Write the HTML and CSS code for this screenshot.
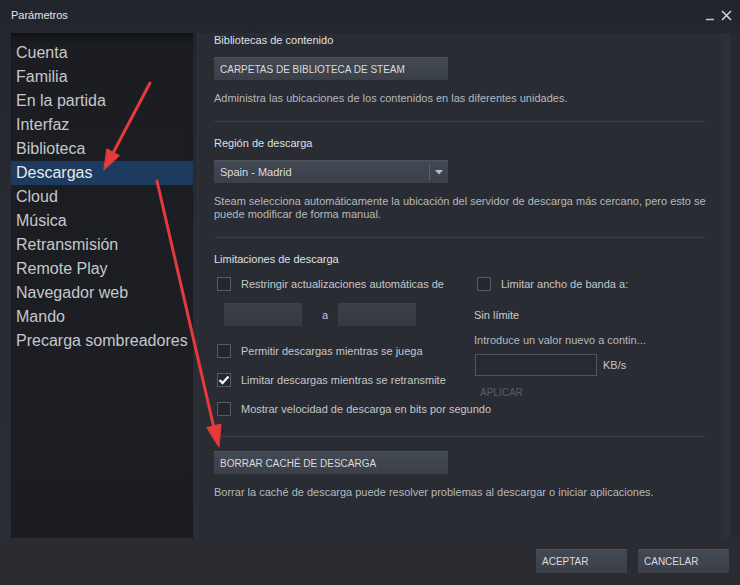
FILE: index.html
```html
<!DOCTYPE html>
<html>
<head>
    <meta charset="UTF-8">
    <title>Parámetros</title>
    <link rel="stylesheet" href="styles.css">
</head>
<body>
    <div class="dialog">
        <div class="titlebar">
            <span class="title">Parámetros</span>
            <div class="window-controls">
                <svg width="10" height="10" viewBox="0 0 10 10"><path d="M1 8.5 H9" stroke="#c8cacd" stroke-width="1.4"/></svg>
                <svg width="11" height="11" viewBox="0 0 11 11"><path d="M1 1 L10 10 M10 1 L1 10" stroke="#d4d6d8" stroke-width="1.5"/></svg>
            </div>
        </div>

        <div class="main">
            <ul class="nav">
                <li>Cuenta</li>
                <li>Familia</li>
                <li>En la partida</li>
                <li>Interfaz</li>
                <li>Biblioteca</li>
                <li class="active">Descargas</li>
                <li>Cloud</li>
                <li>Música</li>
                <li>Retransmisión</li>
                <li>Remote Play</li>
                <li>Navegador web</li>
                <li>Mando</li>
                <li>Precarga sombreadores</li>
            </ul>

            <div class="page">
                <h3 class="group-title">Bibliotecas de contenido</h3>
                <button class="steam-btn wide gap-btn">CARPETAS DE BIBLIOTECA DE STEAM</button>
                <p class="desc gap-desc">Administra las ubicaciones de los contenidos en las diferentes unidades.</p>
                <div class="sep"></div>

                <h3 class="group-title">Región de descarga</h3>
                <div class="dropdown gap-btn">
                    <span class="dropdown-value">Spain - Madrid</span>
                    <span class="dropdown-arrow">
                        <svg width="8" height="5" viewBox="0 0 8 5"><path d="M0 0 H8 L4 4.5 Z" fill="#b9bcc0"/></svg>
                    </span>
                </div>
                <p class="desc two-line">Steam selecciona automáticamente la ubicación del servidor de descarga más cercano, pero esto se puede modificar de forma manual.</p>
                <div class="sep"></div>

                <h3 class="group-title">Limitaciones de descarga</h3>
                <div class="limits">
                    <div class="limits-left">
                        <label class="check first"><span class="box"></span>Restringir actualizaciones automáticas de</label>
                        <div class="time-range">
                            <span class="time-field"></span>
                            <span class="time-sep">a</span>
                            <span class="time-field"></span>
                        </div>
                        <label class="check after-range"><span class="box"></span>Permitir descargas mientras se juega</label>
                        <label class="check next"><span class="box checked">
                            <svg width="12" height="10" viewBox="0 0 12 10"><path d="M1.5 5 L4.5 8 L10.5 1.5" fill="none" stroke="#f2f2f2" stroke-width="2.4"/></svg>
                        </span>Limitar descargas mientras se retransmite</label>
                        <label class="check next nowrap"><span class="box"></span>Mostrar velocidad de descarga en bits por segundo</label>
                    </div>
                    <div class="limits-right">
                        <label class="check first"><span class="box"></span>Limitar ancho de banda a:</label>
                        <div class="bw-current">Sin límite</div>
                        <div class="bw-hint">Introduce un valor nuevo a contin...</div>
                        <div class="bw-row">
                            <span class="bw-input"></span>
                            <span class="bw-unit">KB/s</span>
                        </div>
                        <div class="bw-apply">APLICAR</div>
                    </div>
                </div>
                <div class="sep sep-low"></div>

                <button class="steam-btn wide cache-btn">BORRAR CACHÉ DE DESCARGA</button>
                <p class="desc gap-desc">Borrar la caché de descarga puede resolver problemas al descargar o iniciar aplicaciones.</p>
            </div>
            <div class="track"></div>
        </div>

        <div class="footer">
            <button class="steam-btn footer-btn">ACEPTAR</button>
            <button class="steam-btn footer-btn">CANCELAR</button>
        </div>

        <!-- red pointers over the dialog -->
        <svg class="pointers" width="740" height="585" viewBox="0 0 740 585">
            <g fill="#e43a3c" stroke="#e43a3c" stroke-linecap="round">
                <line x1="150" y1="83" x2="112" y2="155" stroke-width="3"/>
                <polygon points="104,170 119.5,155.6 107.1,149" stroke-width="1" stroke-linejoin="round"/>
                <line x1="157" y1="181" x2="214" y2="428" stroke-width="3"/>
                <polygon points="219,447 221,424 207,427.5" stroke-width="1" stroke-linejoin="round"/>
            </g>
        </svg>
    </div>
</body>
</html>
```

FILE: styles.css
```css
html, body {
    padding: 0;
    margin: 0;
}

body {
    font-family: "Liberation Sans", Arial, sans-serif;
    background-color: #24272d;
    color: #c4c7ca;
}

.dialog {
    position: relative;
    width: 740px;
    height: 585px;
    display: flex;
    flex-direction: column;
    background: linear-gradient(#22252b, #282b31 40%, #2a2d33);
    overflow: hidden;
}

.titlebar {
    height: 33px;
    display: flex;
    align-items: flex-start;
    justify-content: space-between;
    padding: 9px 8px 0 11px;
    box-sizing: border-box;
}

.title {
    font-size: 11px;
    line-height: 13px;
    color: #e2e4e6;
}

.window-controls {
    display: flex;
    align-items: flex-end;
    gap: 6px;
    padding-top: 1px;
}

.main {
    flex: 1;
    display: flex;
    padding-left: 11px;
    min-height: 0;
}

.nav {
    list-style: none;
    margin: 0;
    padding: 8px 0 0 0;
    width: 182px;
    background: linear-gradient(#16171b, #1c1d22 3%, #1d1e23 80%, #1b1c21);
    box-shadow: inset 0 5px 4px -3px #101114;
}

.nav li {
    font-size: 16px;
    line-height: 24px;
    height: 24px;
    padding-left: 5px;
    color: #c5c8cb;
    white-space: nowrap;
}

.nav li.active {
    background-color: #1c3b5e;
    color: #e6e9ec;
}

.page {
    flex: 1;
    margin-left: 4px;
    padding: 0 15px 0 16px;
    background-color: #292c33;
    border-left: 1px solid #2f3239;
    display: flex;
    flex-direction: column;
    align-items: flex-start;
}

.track {
    width: 20px;
    background: linear-gradient(90deg, #2b2e35, #2e3137 50%, #26292e 50%);
}

.group-title {
    margin: 0;
    font-size: 11px;
    line-height: 14px;
    font-weight: normal;
    color: #dfe1e3;
}

.sep {
    align-self: stretch;
    height: 1px;
    background-color: #3b3e45;
    margin: 16px 0 14px 0;
}

.sep-low {
    margin: 20px 0 14px 0;
}

.steam-btn {
    font-family: inherit;
    font-size: 10px;
    color: #dadcde;
    text-align: left;
    border: none;
    border-top: 1px solid #4c525c;
    background: linear-gradient(#434953, #3a3f48);
    padding: 0 6px;
    box-sizing: border-box;
}

.wide {
    width: 234px;
    height: 23px;
}

.gap-btn {
    margin-top: 10px;
}

.desc {
    margin: 0;
    font-size: 11px;
    line-height: 14px;
    color: #b5b9bd;
}

.gap-desc {
    margin-top: 11px;
}

.two-line {
    margin: 12px -10px 0 0;
    line-height: 13px;
}

.dropdown {
    width: 234px;
    height: 23px;
    display: flex;
    align-items: center;
    background: linear-gradient(#434953, #3a3f48);
    border-top: 1px solid #4c525c;
    box-sizing: border-box;
    font-size: 11px;
    color: #dadcde;
}

.dropdown-value {
    flex: 1;
    padding-left: 6px;
}

.dropdown-arrow {
    width: 18px;
    height: 17px;
    border-left: 1px solid #5c626c;
    display: flex;
    align-items: center;
    justify-content: center;
}

.limits {
    display: flex;
    align-self: stretch;
}

.limits-left {
    width: 260px;
    display: flex;
    flex-direction: column;
}

.limits-right {
    flex: 1;
    display: flex;
    flex-direction: column;
    align-items: flex-start;
    font-size: 11px;
    line-height: 14px;
}

.check {
    display: flex;
    align-items: center;
    gap: 10px;
    margin-left: 3px;
    font-size: 11px;
    line-height: 14px;
    color: #c4c7ca;
}

.nowrap {
    white-space: nowrap;
}

.check.first {
    margin-top: 11px;
}

.check.after-range {
    margin-top: 18px;
}

.check.next {
    margin-top: 15px;
}

.box {
    width: 14px;
    height: 14px;
    box-sizing: border-box;
    border: 1px solid #575b62;
    background-color: #24262b;
    display: flex;
    align-items: center;
    justify-content: center;
    flex: none;
}

.time-range {
    display: flex;
    align-items: center;
    margin: 12px 0 0 10px;
}

.time-field {
    width: 78px;
    height: 23px;
    background: linear-gradient(#3c4048, #353940);
}

.time-sep {
    width: 36px;
    box-sizing: border-box;
    padding-left: 20px;
    font-size: 11px;
    color: #c4c7ca;
}

.bw-current {
    margin-top: 17px;
    color: #c9cccf;
}

.bw-hint {
    margin-top: 11px;
    color: #b5b9bd;
}

.bw-row {
    display: flex;
    align-items: center;
    gap: 6px;
    margin: 7px 0 0 1px;
}

.bw-input {
    width: 122px;
    height: 22px;
    box-sizing: border-box;
    border: 1px solid #50545c;
    background-color: #272a30;
}

.bw-unit {
    color: #c4c7ca;
}

.bw-apply {
    margin: 10px 0 0 6px;
    font-size: 10px;
    color: #595d65;
}

.cache-btn {
    margin: 0;
}

.footer {
    height: 47px;
    display: flex;
    justify-content: flex-end;
    align-items: flex-start;
    gap: 11px;
    padding: 11px 11px 0 0;
    box-sizing: border-box;
    background-color: #2a2c32;
}

.footer-btn {
    width: 91px;
    height: 24px;
}

.pointers {
    position: absolute;
    left: 0;
    top: 0;
    pointer-events: none;
}
```
